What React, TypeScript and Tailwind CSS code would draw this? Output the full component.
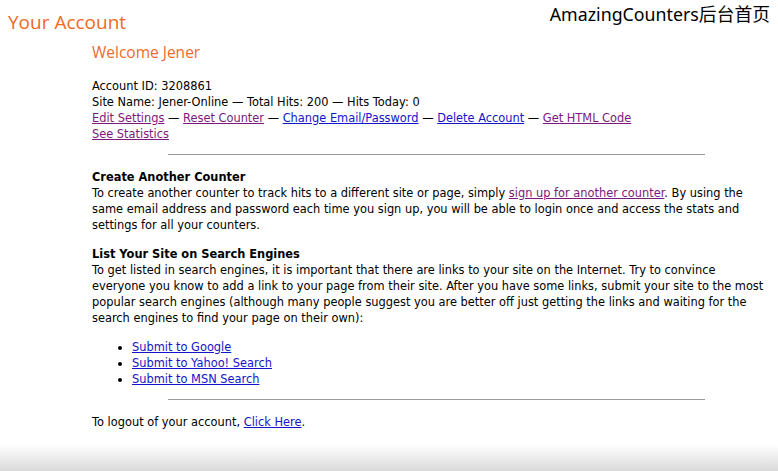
import React from "react";

const visited = "text-[#7a1a7a] underline";
const link = "text-[#1414c8] underline";

export default function App() {
  return (
    <div className="relative min-h-[471px] bg-white text-black flex flex-col font-['DejaVu_Sans',sans-serif] text-[11.4px] leading-[16px]">
      {/* watermark */}
      <div className="absolute right-[8px] top-[2px] text-[17.8px] leading-[24px] text-black font-['Noto_Sans','Noto_Sans_CJK_SC',sans-serif]">
        AmazingCounters后台首页
      </div>

      <h1 className="pl-[8px] pt-[10px] text-[19px] leading-[24px] text-[#f06a1e] font-['Open_Sans',sans-serif]">
        Your Account
      </h1>

      <div className="ml-[92px] w-[673px] flex-1">
        <h2 className="mt-[8px] text-[15.5px] leading-[20px] text-[#ec6c2c] font-['Open_Sans',sans-serif]">
          Welcome Jener
        </h2>

        <p className="mt-[16px]">
          Account ID: 3208861
          <br />
          Site Name: Jener-Online — Total Hits: 200 — Hits Today: 0
          <br />
          <a className={visited}>Edit Settings</a> — <a className={visited}>Reset Counter</a> —{" "}
          <a className={link}>Change Email/Password</a> — <a className={link}>Delete Account</a> —{" "}
          <a className={visited}>Get HTML Code</a>
          <br />
          <a className={visited}>See Statistics</a>
        </p>

        <hr className="ml-[76px] mt-[12px] w-[537px] border-0 border-t border-[#9a9a9a]" />

        <p className="mt-[14px]">
          <b>Create Another Counter</b>
          <br />
          To create another counter to track hits to a different site or page, simply{" "}
          <a className={visited}>sign up for another counter</a>. By using the same email address and password each
          time you sign up, you will be able to login once and access the stats and settings for all your counters.
        </p>

        <p className="mt-[13px]">
          <b>List Your Site on Search Engines</b>
          <br />
          To get listed in search engines, it is important that there are links to your site on the Internet. Try to
          convince everyone you know to add a link to your page from their site. After you have some links, submit your
          site to the most popular search engines (although many people suggest you are better off just getting the
          links and waiting for the search engines to find your page on their own):
        </p>

        <ul className="mt-[13px] pl-[40px] list-disc">
          <li>
            <a className={link}>Submit to Google</a>
          </li>
          <li>
            <a className={link}>Submit to Yahoo! Search</a>
          </li>
          <li>
            <a className={link}>Submit to MSN Search</a>
          </li>
        </ul>

        <hr className="ml-[76px] mt-[12px] w-[537px] border-0 border-t border-[#9a9a9a]" />

        <p className="mt-[14px]">
          To logout of your account, <a className={link}>Click Here</a>.
        </p>
      </div>

      <div className="h-[26px] bg-gradient-to-b from-white to-[#d9d9d9]" />
    </div>
  );
}
